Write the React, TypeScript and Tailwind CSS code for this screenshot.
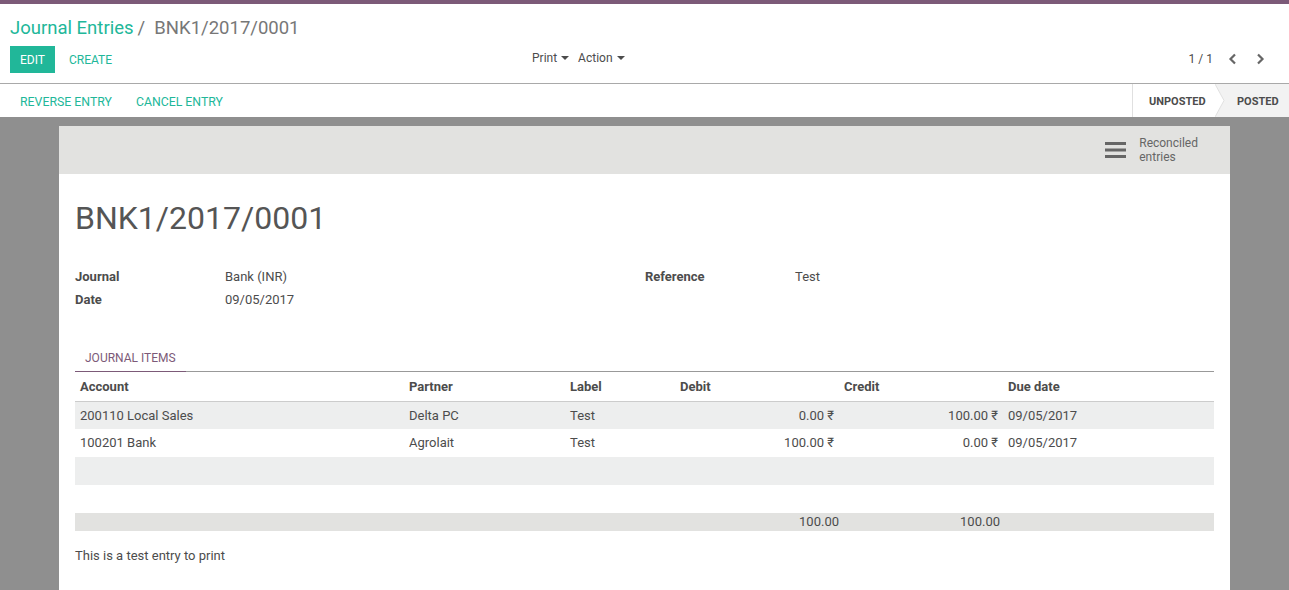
import React from 'react';

const rows = [
  { account: '200110 Local Sales', partner: 'Delta PC', label: 'Test', debit: '0.00 ₹', credit: '100.00 ₹', due: '09/05/2017' },
  { account: '100201 Bank', partner: 'Agrolait', label: 'Test', debit: '100.00 ₹', credit: '0.00 ₹', due: '09/05/2017' },
];

function Caret() {
  return <span className="ml-1 inline-block border-x-[4px] border-t-[4px] border-x-transparent border-t-[#4c4c4c] align-middle" />;
}

function Chevron({ dir }: { dir: 'left' | 'right' }) {
  return (
    <svg width="10" height="12" viewBox="0 0 10 12">
      <path d={dir === 'left' ? 'M7 1.5 L2.5 6 L7 10.5' : 'M3 1.5 L7.5 6 L3 10.5'} stroke="#666" strokeWidth="2.2" fill="none" />
    </svg>
  );
}

export default function App() {
  return (
    <div className="flex h-[590px] flex-col overflow-hidden bg-[#8f8f8f] text-[13px] text-[#4c4c4c]" style={{ fontFamily: 'Roboto, "Liberation Sans", sans-serif' }}>
      <div className="h-[4px] bg-[#7c5a78]" />

      {/* control panel */}
      <div className="h-[80px] border-b border-[#a9a9a9] bg-white px-[10px]">
        <div className="flex h-[42px] items-center pt-[7px] text-[18.5px]">
          <span className="text-[#21b799]">Journal Entries</span>
          <span className="ml-[4px] text-[#777]">/&nbsp;&nbsp;BNK1/2017/0001</span>
        </div>
        <div className="flex items-center">
          <div className="flex w-[500px] items-center">
            <button className="h-[27px] w-[45px] bg-[#21b799] text-[12px] text-white">EDIT</button>
            <button className="ml-[14px] text-[12px] text-[#21b799]">CREATE</button>
          </div>
          <div className="-mt-[4px] ml-[22px] flex items-center text-[12px]">
            <span>Print</span><Caret />
            <span className="ml-[9px]">Action</span><Caret />
          </div>
          <div className="-mt-[2px] ml-auto mr-[14px] flex items-center text-[12px]">
            <span>1 / 1</span>
            <span className="ml-[15px]"><Chevron dir="left" /></span>
            <span className="ml-[17px]"><Chevron dir="right" /></span>
          </div>
        </div>
      </div>

      {/* status bar */}
      <div className="flex h-[33px] items-center bg-white pl-[20px]">
        <span className="pt-[3px] text-[12.3px] text-[#21b799]">REVERSE ENTRY</span>
        <span className="ml-[24px] pt-[3px] text-[12.3px] text-[#21b799]">CANCEL ENTRY</span>
        <div className="ml-auto flex h-full items-stretch text-[11px] font-bold text-[#4c4c4c]">
          <div className="relative flex w-[84px] items-center border-l border-[#e0e0e0] bg-white pl-[16px] pt-[3px]">
            UNPOSTED
            <svg className="absolute right-[-9px] top-0 z-10" width="10" height="33" viewBox="0 0 10 33">
              <path d="M0 0 L9 16.5 L0 33 Z" fill="#fff" />
              <path d="M0 0 L9 16.5 L0 33" stroke="#e0e0e0" fill="none" />
            </svg>
          </div>
          <div className="flex w-[73px] items-center bg-[#f2f2f2] pl-[21px] pt-[3px]">POSTED</div>
        </div>
      </div>

      {/* sheet */}
      <div className="mx-[59px] mt-[9px] flex-1 bg-white">
        <div className="flex h-[48px] justify-end bg-[#e2e2e0] pr-[32px]">
          <div className="flex items-center text-[12px] leading-[14px] text-[#666]">
            <svg width="22" height="20" viewBox="0 0 22 20" className="mr-[12px]">
              <rect x="0" y="2" width="21" height="3" fill="#666" />
              <rect x="0" y="8.5" width="21" height="3" fill="#666" />
              <rect x="0" y="15" width="21" height="3" fill="#666" />
            </svg>
            <div>Reconciled<br />entries</div>
          </div>
        </div>

        <div className="px-[16px]">
          <h1 className="mt-[24px] text-[32px] leading-[40px] text-[#555]">BNK1/2017/0001</h1>

          <div className="mt-[31px] grid grid-cols-[150px_420px_150px_1fr] gap-y-[7px] leading-[16px]">
            <div className="font-bold">Journal</div>
            <div>Bank (INR)</div>
            <div className="font-bold">Reference</div>
            <div>Test</div>
            <div className="font-bold">Date</div>
            <div>09/05/2017</div>
            <div />
            <div />
          </div>

          {/* notebook */}
          <div className="mt-[43px] flex border-b border-[#999]">
            <div className="-mb-px border-b border-[#7c5a78] px-[10px] pb-[6px] text-[12px] leading-[14px] text-[#7c5a78]">JOURNAL ITEMS</div>
          </div>

          <table className="w-full border-collapse">
            <colgroup>
              <col className="w-[329px]" />
              <col className="w-[161px]" />
              <col className="w-[110px]" />
              <col className="w-[164px]" />
              <col className="w-[164px]" />
              <col />
            </colgroup>
            <thead>
              <tr className="border-b border-[#ccc] text-left font-bold">
                <th className="h-[29px] px-[5px]">Account</th>
                <th className="px-[5px]">Partner</th>
                <th className="px-[5px]">Label</th>
                <th className="px-[5px]">Debit</th>
                <th className="px-[5px]">Credit</th>
                <th className="px-[5px]">Due date</th>
              </tr>
            </thead>
            <tbody>
              {rows.map((r, i) => (
                <tr key={r.account} className={i % 2 === 0 ? 'bg-[#edeeee]' : 'bg-white'}>
                  <td className="h-[28px] px-[5px]">{r.account}</td>
                  <td className="px-[5px]">{r.partner}</td>
                  <td className="px-[5px]">{r.label}</td>
                  <td className="px-[5px] text-right">{r.debit}</td>
                  <td className="px-[5px] text-right">{r.credit}</td>
                  <td className="px-[5px]">{r.due}</td>
                </tr>
              ))}
              <tr className="bg-[#edeeee]"><td colSpan={6} className="h-[28px]" /></tr>
              <tr className="bg-white"><td colSpan={6} className="h-[28px]" /></tr>
            </tbody>
            <tfoot>
              <tr className="bg-[#e2e2e0] leading-[18px]">
                <td className="h-[18px]" />
                <td />
                <td />
                <td className="pr-0 text-right">100.00</td>
                <td className="pr-[3px] text-right">100.00</td>
                <td />
              </tr>
            </tfoot>
          </table>

          <p className="mt-[15px]">This is a test entry to print</p>
        </div>
      </div>
    </div>
  );
}
